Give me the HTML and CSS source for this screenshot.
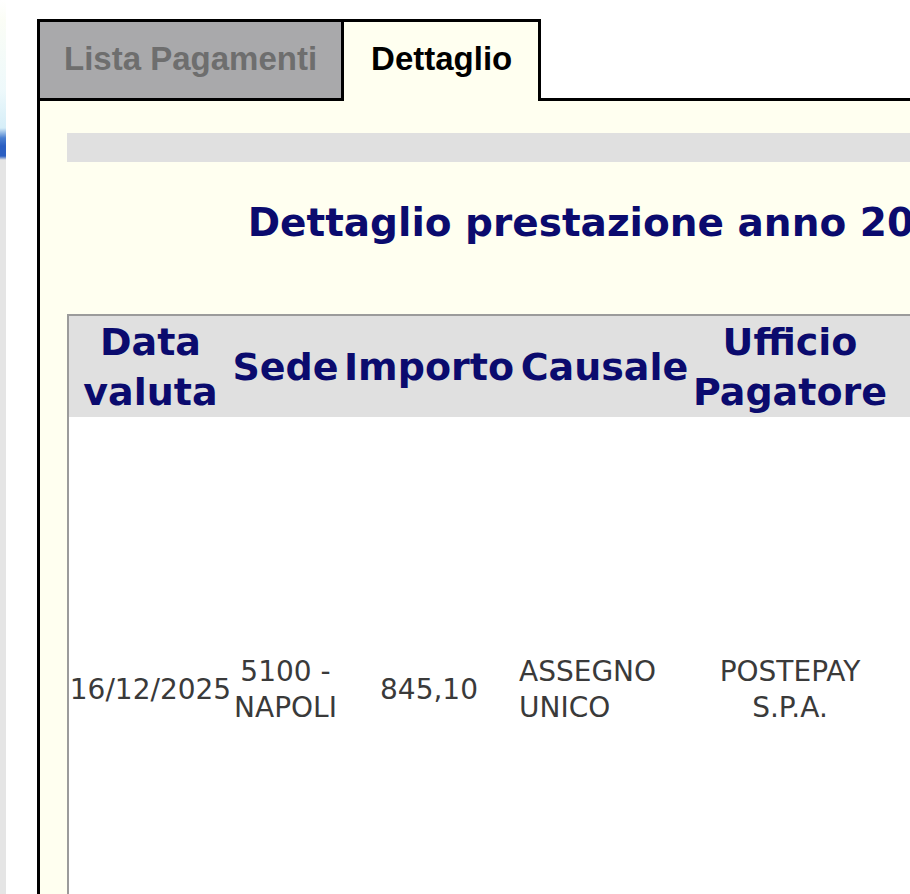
FILE: index.html
```html
<!DOCTYPE html>
<html lang="it">
<head>
<meta charset="utf-8">
<title>Dettaglio prestazione</title>
<link rel="stylesheet" href="styles.css">
</head>
<body>
<div class="page">
  <div class="edge"></div>
  <div class="main">
    <div class="tabs">
      <div class="tab tab-off">Lista Pagamenti</div>
      <div class="tab tab-on">Dettaglio</div>
      <div class="tab-fill"></div>
    </div>
    <div class="panel">
      <div class="inner">
        <div class="bar"></div>
        <h1 class="title">Dettaglio prestazione anno 2025</h1>
        <table class="grid">
          <colgroup>
            <col class="c-data">
            <col class="c-sede">
            <col class="c-imp">
            <col class="c-caus">
            <col class="c-uff">
            <col class="c-rest">
          </colgroup>
          <thead>
            <tr>
              <th>Data valuta</th>
              <th>Sede</th>
              <th>Importo</th>
              <th>Causale</th>
              <th>Ufficio Pagatore</th>
              <th></th>
            </tr>
          </thead>
          <tbody>
            <tr>
              <td>16/12/2025</td>
              <td>5100 - NAPOLI</td>
              <td>845,10</td>
              <td class="left">ASSEGNO UNICO</td>
              <td>POSTEPAY S.P.A.</td>
              <td></td>
            </tr>
          </tbody>
        </table>
      </div>
    </div>
  </div>
</div>
</body>
</html>
```

FILE: styles.css
```css
html, body {
  margin: 0;
  padding: 0;
  background: #ffffff;
  overflow: hidden;
}

.page {
  display: flex;
  width: 1300px;
  height: 894px;
}

.edge {
  width: 6px;
  flex: none;
  background: linear-gradient(to bottom,
    #ffffff 0,
    #fbfdf6 20px,
    #eef9fb 90px,
    #d6eef8 128px,
    #4a7fd0 138px,
    #2a5ec2 146px,
    #2a5ec2 156px,
    #e5e5e5 160px,
    #e5e5e5 100%);
}

.main {
  margin-left: 31px;
  margin-top: 19px;
  flex: 1;
  display: flex;
  flex-direction: column;
}

.tabs {
  display: flex;
  align-items: stretch;
  height: 82px;
  flex: none;
}

.tab {
  font-family: "Liberation Sans", Arial, sans-serif;
  font-weight: bold;
  font-size: 33px;
  line-height: 74px;
  white-space: nowrap;
}

.tab-off {
  background: #a9a9ab;
  color: #6e6e6e;
  border: 3px solid #000;
  padding: 0 24px;
}

.tab-on {
  background: #fffff0;
  color: #000;
  border-top: 3px solid #000;
  border-right: 3px solid #000;
  padding: 0 26px 0 27px;
}

.tab-fill {
  flex: 1;
  border-bottom: 3px solid #000;
}

.panel {
  flex: 1;
  border-left: 3px solid #000;
  background: #fffff0;
  padding: 32px 0 0 27px;
}

.inner {
  width: 1082px;
}

.bar {
  height: 29px;
  background: #e0e0e0;
}

.title {
  margin: 38px 0 0;
  font-family: "DejaVu Sans", Verdana, sans-serif;
  font-weight: bold;
  font-size: 39px;
  line-height: 46px;
  color: #0b0b6e;
  text-align: center;
}

.grid {
  margin-top: 68px;
  border-collapse: collapse;
  table-layout: fixed;
  width: 1082px;
  border-top: 2px solid #9b9b9b;
  border-left: 2px solid #9b9b9b;
}

.c-data { width: 164px; }
.c-sede { width: 107px; }
.c-imp { width: 180px; }
.c-caus { width: 171px; }
.c-uff { width: 200px; }

.grid th {
  background: #e0e0e0;
  color: #0b0b6e;
  font-family: "DejaVu Sans", Verdana, sans-serif;
  font-weight: bold;
  font-size: 38px;
  line-height: 50px;
  padding: 1px 0 0;
  text-align: center;
  vertical-align: middle;
}

.grid td {
  background: #ffffff;
  color: #3a3a3a;
  font-family: "DejaVu Sans", Verdana, sans-serif;
  font-size: 28px;
  line-height: 36px;
  height: 546px;
  padding: 0;
  text-align: center;
  vertical-align: middle;
}

.grid td.left {
  text-align: left;
}
```
